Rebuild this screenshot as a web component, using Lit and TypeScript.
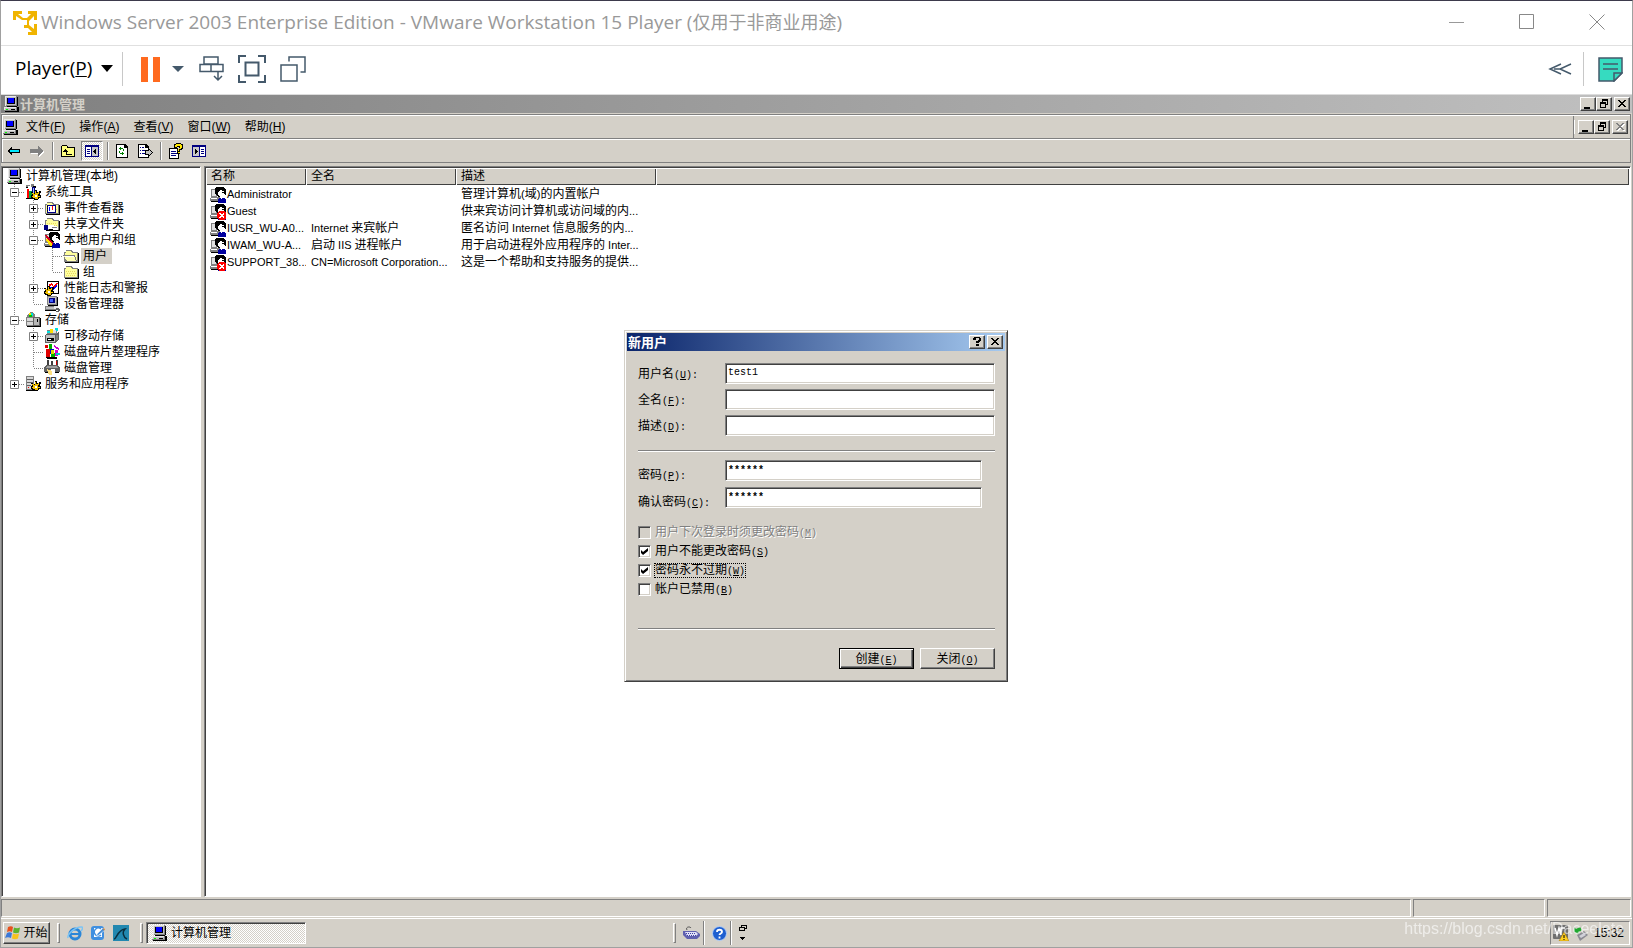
import { LitElement, html, css, svg, nothing } from "lit";
import { customElement } from "lit/decorators.js";

/* ---------- text helper: Latin runs are set a little smaller than Han ---------- */
const mix = (text: string) =>
  text
    .split(/([\x20-\x7e]+)/)
    .filter((s) => s)
    .map((s) => (/^[\x20-\x7e]/.test(s) ? html`<span class="latin">${s}</span>` : s));
const key = (text: string, k: string, tail = "") =>
  html`${text}<span class="latin">(<u>${k}</u>)${tail}</span>`;

/* ---------- icons ---------- */
const pix = (body: unknown, w = 16, h = 16) =>
  html`<svg class="pix" width=${w} height=${h} viewBox="0 0 ${w} ${h}" aria-hidden="true">${body}</svg>`;

const gear = (x: number, y: number) => svg`
  <g transform="translate(${x} ${y})">
    <path fill="#000" d="M4 0h2v2h2v-1h2v2h-1v2h1v3h-2v1h-1v1H3V9H1V8H0V5h1V3H0V2h2v1h2z"/>
    <path fill="#f0c000" d="M4 1h1v2h2V2h1v2h-1v2h2v1H7v2H4V8H2V7H1V6h1V4H1V3h2v1h1z"/>
    <path fill="#fff" d="M4 5h2v2H4z"/>
  </g>`;
const folder = (open = false) => svg`
  <path fill="#808080" d="M3 2h5l2 2h5v10H1V4h2z"/>
  <path fill="#ffff9c" d="M3 3h4l2 2h5v8H2V5h1z"/>
  <path fill="#e8d860" d="M3 7h1v1H3zM5 7h1v1H5zM7 7h1v1H7zM9 7h1v1H9zM11 7h1v1h-1zM4 9h1v1H4zM6 9h1v1H6zM8 9h1v1H8zM10 9h1v1h-1zM12 9h1v1h-1zM3 11h1v1H3zM5 11h1v1H5zM7 11h1v1H7zM9 11h1v1H9zM11 11h1v1h-1z"/>
  <path fill="#000" d="M15 5h1v10H2v-1h13z"/>
  ${open ? svg`<path fill="#808080" d="M0 7h12l2 6v1H3z"/><path fill="#ffffb0" d="M1 8h10l2 5H4z"/><path fill="#fff" d="M2 8h9v1H2z"/>` : nothing}`;
const head = svg`
  <path fill="#808080" d="M1 2h6v8H1z"/><path fill="#e0e0e0" d="M2 3h4v6H2z"/>
  <path fill="#808080" d="M1 10h9v4H0v-3z"/><path fill="#fff" d="M1 11h6v1H1z"/><path fill="#000" d="M0 14h11v1H1z"/>
  <path fill="#000" d="M6 0h7l3 3v5h-2L8 10 5 7V2z"/>
  <path fill="#fff" d="M10 3l4 1v2l1 2-1 1v2h-3L8 8V6z"/><path fill="#000" d="M12 5h2v1h-2z"/>
  <path fill="#0000a0" d="M9 11h5l2 2v3H8v-3z"/><path fill="#fff" d="M11 10h2l-1 3z"/>`;

const icons: Record<string, unknown> = {
  computer: pix(svg`
    <path fill="#808080" d="M2 0h12v10H2zM1 11h13v4H1z"/>
    <path fill="#e8e8e8" d="M2 0h11v1H3v9H2zM1 11h12v1H2v2H1z"/>
    <path fill="#c0c0c0" d="M3 1h10v8H3zM2 12h11v2H2z"/>
    <path fill="#000" d="M4 2h8v6H4z"/><path fill="#0000ff" d="M5 2h6v5H5z"/>
    <path fill="#000" d="M14 1h1v9h-1v1H4v-1h10zM14 11h1l1 1v3l-1 1H2v-1h12zM8 13h4v1H8z"/>
    <path fill="#00ff00" d="M3 13h2v1H3z"/>`),
  tools: pix(svg`
    <path fill="#808080" d="M1 1h4v2H1zM6 0h3v3H6z"/><path fill="#000" d="M1 3h5v1H1zM8 2h3v2H8z"/>
    <path fill="#fff" d="M3 2h3v4H3z"/><path fill="#ff0000" d="M2 5h2v9H2z"/><path fill="#00a040" d="M4 7h3v7H4z"/>
    <path fill="#000080" d="M7 3h3v9H7z"/><path fill="#a0c0ff" d="M8 4h1v7H8z"/><path fill="#000" d="M1 14h7v1H1z"/>${gear(6, 6)}`),
  event: pix(svg`${folder()}<path fill="#000080" d="M3 5h9v8H3z"/><path fill="#fff" d="M4 6h7v6H4z"/><path fill="#f00" d="M8 6h1v4H8z"/><path fill="#00f" d="M5 7h1v4H5z"/><path fill="#000" d="M3 6h1v1H3zM3 8h1v1H3zM3 10h1v1H3z"/>`),
  share: pix(svg`${folder()}<path fill="#000080" d="M0 9h4v5H0z"/><path fill="#fff" d="M4 9h5l5 2v3H6l-2-1z"/><path fill="#000" d="M4 13h3l3 1h4v1H6z"/><path fill="#808080" d="M8 11h5v1H8z"/>`),
  users: pix(svg`${head}<path fill="#d00020" d="M1 3h2l6 8v2H7z"/><path fill="#ffe000" d="M3 6l5 6v2H6L2 8z"/>`),
  openfolder: pix(folder(true)),
  folder: pix(folder()),
  perf: pix(svg`<path fill="#000" d="M3 1h12v13H3z"/><path fill="#fff" d="M4 2h10v11H4z"/><path fill="#f00" d="M5 4h2V3h1v1h1v2h1V5h1V4h1V3h2v1h-1v1h-1v1h-1v1H9V6H8V5H7v1H5z"/><path fill="#00f" d="M5 8h1V7h2v1h2V7h1V6h1V5h1v2h-1v1h-1v1h-1v1H9V9H7v1H5z"/>${gear(0, 6)}`),
  device: pix(svg`<path fill="#808080" d="M3 0h10v9H3zM1 10h13v4H1z"/><path fill="#c0c0c0" d="M4 1h8v7H4zM2 11h9v2H2z"/><path fill="#000080" d="M5 2h6v5H5z"/><path fill="#4060ff" d="M6 3h3v3H6z"/><path fill="#000" d="M13 1h1v9H4V9h9zM1 14h11v1H1z"/><path fill="#e8e8e8" d="M10 10h4v3h-4z"/><path fill="#606060" d="M12 12h3l1 2-2 2h-2v-1h2v-1h-2z"/>`),
  storage: pix(svg`<path fill="#808080" d="M1 5h14v9H1z"/><path fill="#d8d8d8" d="M2 6h7v3H2zM2 10h7v3H2z"/><path fill="#808080" d="M2 3l3-3h2l3 3v3H2z"/><path fill="#ffe000" d="M4 1h2v3H4z"/><path fill="#00e0e0" d="M6 1h2v3H6z"/><path fill="#00c000" d="M4 3h3v2H4z"/><path fill="#606060" d="M8 5h7v9H8z"/><path fill="#b8b8b8" d="M9 6h5v7H9z"/><path fill="#000" d="M12 7h1v3h-1zM15 6h1v9H2v-1h13z"/>`),
  removable: pix(svg`<path fill="#606060" d="M2 6h10l3-3v8l-3 4H1V7z"/><path fill="#c0c0c0" d="M2 7h9v7H2z"/><path fill="#000" d="M3 10h7v3H3z"/><path fill="#fff" d="M4 11h3v1H4z"/><path fill="#808080" d="M3 2h10v4H3z"/><path fill="#00e0e0" d="M3 3h3v2H3zM11 0h3v3h-3z"/><path fill="#ffe000" d="M6 1h3v4H6z"/><path fill="#e0e0e0" d="M9 2h3v3H9z"/><path fill="#808080" d="M12 7h2v5h-2z"/>`),
  defrag: pix(svg`<path fill="#e00000" d="M1 1h3v3H1zM2 5h4v9H2z"/><path fill="#00b000" d="M5 0h3v5H5zM7 9h4v5H7z"/><path fill="#0000d0" d="M6 5h4v5H6z"/><path fill="#e0d000" d="M7 6h3v4H7z"/><path fill="#d000d0" d="M10 1l5 3v2l-5-3zM11 6h3v6h-3z"/><path fill="#00d0d0" d="M12 9h4v2h-4z"/><path fill="#000" d="M1 13h12v2H4z"/>`),
  disk: pix(svg`<path fill="#404040" d="M3 0h2v6H3zM7 1h2v4H7zM12 0h2v6h-2z"/><path fill="#d00000" d="M12 1h1v4h-1z"/><path fill="#606060" d="M2 5h12l2 3v4H0V8z"/><path fill="#a0a0a0" d="M3 6h10l1 2H2z"/><path fill="#000" d="M0 12h15v1H1z"/><path fill="#ffe080" d="M3 9l5 2v4H5z"/><path fill="#fff" d="M7 9h4v4H8z"/>`),
  services: pix(svg`<path fill="#808080" d="M1 0h8v14H1z"/><path fill="#d8d8d8" d="M2 1h6v12H2z"/><path fill="#606060" d="M2 3h6v1H2zM2 6h6v1H2zM2 9h4v1H2z"/><path fill="#f00" d="M3 11h1v1H3z"/><path fill="#000" d="M1 14h9v1H1z"/>${gear(6, 5)}`),
  user: pix(head),
  userOff: pix(svg`${head}<path fill="#f00" d="M9 7h5l2 2v5l-2 2H9l-2-2V9z"/><path fill="#fff" d="M9 9h1l1.500 1.500L13 9h1v1l-1.500 1.500L14 13v1h-1l-1.500-1.500L10 14H9v-1l1.500-1.500L9 10z"/>`),
};

const toolIcons: Record<string, unknown> = {
  back: pix(svg`<path fill="#000" d="M0 6l5-5v3h8v4H5v3z"/><path fill="#00e8ff" d="M2 6l2-2v1h8v2H4v1z"/>`, 13, 12),
  forward: pix(svg`<path fill="#fff" d="M14 7L9 12V9H1V5h8V2z"/><path fill="#808080" d="M13 6L8 11V8H0V4h8V1z"/>`, 14, 12),
  up: pix(svg`<path fill="#000" d="M1 3h1V2h5v1h1v1h7v10H1z"/><path fill="#ffff80" d="M2 3h5v2h7v8H2z"/><path fill="#000" d="M5 6h1v1h1v1h1v1H7v2h5v1H6V9H3V8h1V7h1z"/>`),
  tree: pix(svg`<path fill="#000080" d="M1 2h14v12H1z"/><path fill="#fff" d="M2 4h5v9H2z"/><path fill="#c8c8c8" d="M8 4h6v9H8z"/><path fill="#000080" d="M3 6h3v1H3zM3 8h3v1H3zM3 10h3v1H3z"/><path fill="#000" d="M12 5v7L9 8.500z"/>`),
  refresh: pix(svg`<path fill="#000" d="M2 1h9l3 3v11H2z"/><path fill="#fff" d="M3 2h7v3h3v9H3z"/><path fill="#008000" d="M7 4v1h2v1h1v2H9V6H7v1L5 5.500zM8 12v-1H6v-1H5V8h1v2h2V9l2 1.500z"/>`),
  exportList: pix(svg`<path fill="#000" d="M1 1h8l3 3v11H1z"/><path fill="#fff" d="M2 2h6v3h3v9H2z"/><path fill="#000080" d="M3 4h1v1H3zM5 4h2v1H5zM3 7h1v1H3zM5 7h3v1H5zM3 10h1v1H3zM5 10h3v1H5z"/><path fill="#000" d="M8 7h3V5l5 4.500L11 14v-2H8z"/><path fill="#c0c0c0" d="M9 8h3V7l3 2.500L12 12v-1H9z"/>`),
  help: pix(svg`<path fill="#000" d="M1 5h8l2 2v9H1z"/><path fill="#fff" d="M2 6h7v2h1v7H2z"/><path fill="#000080" d="M3 8h5v1H3zM3 10h6v1H3zM3 12h5v1H3z"/><path fill="#000" d="M6 1h2V0h5v1h2v5h-1v1h-2v4H9V6h2V4H9v1H6z"/><path fill="#ffe800" d="M7 2h1V1h5v1h1v3h-1v1h-2v2h-1V6h1V5h1V3H9v1H7zM10 9h2v1h-2z"/>`),
  pane: pix(svg`<path fill="#000080" d="M1 2h14v12H1z"/><path fill="#c8c8c8" d="M2 4h6v9H2z"/><path fill="#fff" d="M9 4h5v9H9z"/><path fill="#000080" d="M10 6h3v1h-3zM10 8h3v1h-3zM10 10h3v1h-3z"/><path fill="#000" d="M4 5v7l3-3.500z"/>`),
};

const glyph = {
  min: pix(svg`<path d="M3 9h6v2H3z"/>`, 14, 12),
  restore: pix(svg`<path fill-rule="evenodd" d="M5 1h6v6H9V6h1V3H6v1H5zM3 4h6v6H3zM4 6v3h4V6z"/>`, 14, 12),
  close: pix(svg`<path d="M3 2h2v1h1v1h2V3h1V2h2v1h-1v1H9v1H8v1h1v1h1v1h1v1H9V8H8V7H6v1H5v1H3V8h1V7h1V6h1V5H5V4H4V3H3z"/>`, 14, 12),
  help: pix(svg`<path d="M4 1h6v1h1v3h-1v1H9v1H6V5h2V4h1V2H6v2H3V2h1zM6 8h3v2H6z"/>`, 14, 12),
};

interface Node {
  guides: string[]; // one per indent cell: "|" through, "t" tee, "l" elbow, "+" / "-" expander, "e" last expander
  icon: string;
  label: string;
  selected?: boolean;
}
const tree: Node[] = [
  { guides: [], icon: "computer", label: "计算机管理(本地)" },
  { guides: ["-"], icon: "tools", label: "系统工具" },
  { guides: ["|", "+"], icon: "event", label: "事件查看器" },
  { guides: ["|", "+"], icon: "share", label: "共享文件夹" },
  { guides: ["|", "-"], icon: "users", label: "本地用户和组" },
  { guides: ["|", "|", "t"], icon: "openfolder", label: "用户", selected: true },
  { guides: ["|", "|", "l"], icon: "folder", label: "组" },
  { guides: ["|", "+"], icon: "perf", label: "性能日志和警报" },
  { guides: ["|", "l"], icon: "device", label: "设备管理器" },
  { guides: ["-"], icon: "storage", label: "存储" },
  { guides: ["|", "+"], icon: "removable", label: "可移动存储" },
  { guides: ["|", "t"], icon: "defrag", label: "磁盘碎片整理程序" },
  { guides: ["|", "l"], icon: "disk", label: "磁盘管理" },
  { guides: ["e"], icon: "services", label: "服务和应用程序" },
];

const guideCell = (g: string) => {
  const box = "+-e".includes(g);
  const half = g === "l" || g === "e";
  const drawing = html`<svg class="guide" width="19" height="16" viewBox="0 0 19 16" aria-hidden="true">
    <path d="M9.500 0V${half ? 8 : 16}${g === "|" ? "" : "M10 8.500H19"}" stroke="#808080" stroke-dasharray="1 1" fill="none"/>
    ${box
      ? svg`<path fill="#fff" stroke="#808080" d="M5.500 4.500h8v8h-8z"/><path fill="#000" d="M7 8h5v1H7z"/>${g === "-" ? nothing : svg`<path fill="#000" d="M9 6h1v5H9z"/>`}`
      : nothing}
  </svg>`;
  return box ? html`<button class="expander" aria-label=${g === "-" ? "折叠" : "展开"}>${drawing}</button>` : drawing;
};

const accounts = [
  ["user", "Administrator", "", "管理计算机(域)的内置帐户"],
  ["userOff", "Guest", "", "供来宾访问计算机或访问域的内..."],
  ["user", "IUSR_WU-A0...", "Internet 来宾帐户", "匿名访问 Internet 信息服务的内..."],
  ["user", "IWAM_WU-A...", "启动 IIS 进程帐户", "用于启动进程外应用程序的 Inter..."],
  ["userOff", "SUPPORT_38...", "CN=Microsoft Corporation...", "这是一个帮助和支持服务的提供..."],
];

const shared = css`
  :host, * { box-sizing: border-box; }
  svg { display: block; flex: none; }
  .pix { shape-rendering: crispEdges; }
  button { font: inherit; color: inherit; margin: 0; padding: 0; border: 0; background: none; display: flex; align-items: center; justify-content: center; }
  .latin { font-family: "Liberation Sans", sans-serif; font-size: 11px; line-height: 0; }
  .small {
    width: 16px; height: 14px; background: #d4d0c8;
    border: 1px solid; border-color: #fff #404040 #404040 #fff;
    box-shadow: inset -1px -1px #808080;
  }
  .small[disabled] { color: #808080; }
  .small[disabled] svg { fill: #808080; filter: drop-shadow(1px 1px #fff); }
`;

@customElement("new-user-dialog")
class NewUserDialog extends LitElement {
  static styles = [shared, css`
    :host {
      display: block; background: #d4d0c8; padding: 2px;
      border: 1px solid; border-color: #d4d0c8 #404040 #404040 #d4d0c8;
      box-shadow: inset 1px 1px #fff, inset -1px -1px #808080;
      font: 12px/16px "Liberation Sans", "Noto Sans CJK SC", sans-serif; color: #000;
    }
    .latin { font-family: "Liberation Mono", monospace; font-size: 10px; }
    .title { display: flex; align-items: center; height: 18px; padding: 0 2px 0 1px; background: linear-gradient(90deg, #0a246a, #a6caf0); color: #fff; }
    h2 { margin: 0; flex: 1; font: bold 13px/16px "Noto Sans CJK SC", sans-serif; }
    .title button + button { margin-left: 2px; }
    form { padding: 12px 10px 10px 11px; }
    .fields { display: grid; grid-template-columns: 87px 1fr; row-gap: 5px; align-items: center; }
    .fields.secret { padding-right: 13px; row-gap: 6px; align-items: end; }
    .secret label { margin-bottom: -2px; }
    input.text {
      width: 100%; height: 21px; margin: 0; padding: 0 2px 2px; background: #fff; outline: 0; border-radius: 0;
      border: 1px solid; border-color: #808080 #fff #fff #808080;
      box-shadow: inset 1px 1px #404040, inset -1px -1px #d4d0c8;
      font: 10px/16px "Liberation Mono", monospace; color: #000;
    }
    .secret input.text { font-weight: bold; padding-bottom: 0; }
    hr { margin: 0; height: 2px; border: 0; border-top: 1px solid #808080; border-bottom: 1px solid #fff; }
    .fields + hr { margin: 14px 0 8px; }
    .checks { display: grid; grid-auto-rows: 15px; row-gap: 4px; margin: 17px 0 31px; }
    .check { display: flex; align-items: center; gap: 3px; justify-self: start; }
    .check input {
      appearance: none; margin: 0; width: 13px; height: 13px; background: #fff; display: grid; place-items: center; outline: 0;
      border: 1px solid; border-color: #808080 #fff #fff #808080;
      box-shadow: inset 1px 1px #404040, inset -1px -1px #d4d0c8;
    }
    .check input:checked::before { content: ""; width: 7px; height: 7px; background: #000; clip-path: polygon(0 29%, 29% 57%, 100% 0, 100% 43%, 29% 100%, 0 72%); }
    .check .cap { line-height: 13px; border: 1px dotted transparent; }
    .check.focus .cap { border-color: #000; }
    .check.off { color: #808080; text-shadow: 1px 1px #fff; }
    .check.off input { background: #d4d0c8; }
    .actions { display: flex; justify-content: flex-end; gap: 6px; margin-top: 18px; }
    .actions button {
      width: 75px; height: 21px; background: #d4d0c8;
      border: 1px solid; border-color: #fff #404040 #404040 #fff; box-shadow: inset -1px -1px #808080;
    }
    .actions .default { border-color: #000; box-shadow: inset 1px 1px #fff, inset -1px -1px #404040, inset -2px -2px #808080; }
  `];
  field(id: string, text: string, k: string, value = "") {
    return html`<label for=${id}>${key(text, k, ":")}</label><input class="text" id=${id} .value=${value} autocomplete="off" />`;
  }
  check(text: string, k: string, on: boolean, mod = "") {
    return html`<label class="check ${mod}"><input type="checkbox" .checked=${on} ?disabled=${mod === "off"} /><span class="cap">${key(text, k)}</span></label>`;
  }
  render() {
    return html`
      <div class="title"><h2>新用户</h2>
        <button class="small" aria-label="帮助">${glyph.help}</button><button class="small" aria-label="关闭">${glyph.close}</button>
      </div>
      <form @submit=${(e: Event) => e.preventDefault()}>
        <div class="fields">
          ${this.field("name", "用户名", "U", "test1")}
          ${this.field("full", "全名", "F")}
          ${this.field("desc", "描述", "D")}
        </div>
        <hr />
        <div class="fields secret">
          ${this.field("pw", "密码", "P", "******")}
          ${this.field("pw2", "确认密码", "C", "******")}
        </div>
        <div class="checks">
          ${this.check("用户下次登录时须更改密码", "M", false, "off")}
          ${this.check("用户不能更改密码", "S", true)}
          ${this.check("密码永不过期", "W", true, "focus")}
          ${this.check("帐户已禁用", "B", false)}
        </div>
        <hr />
        <div class="actions"><button class="default"><span>${key("创建", "E")}</span></button><button type="button"><span>${key("关闭", "O")}</span></button></div>
      </form>`;
  }
}

@customElement("player-bar")
class PlayerBar extends LitElement {
  static styles = [shared, css`
    :host { display: block; background: #fff; font-family: "Open Sans", "Noto Sans CJK SC", sans-serif; }
    .caption { display: flex; align-items: center; height: 45px; padding: 0 27px 2px 11px; border-bottom: 1px solid #e0e0e0; }
    h1 { flex: 1; margin: 0 0 0 4px; font-size: 19px; line-height: 24px; font-weight: 400; color: #999; white-space: nowrap; }
    .han { font-size: 18px; line-height: 0; }
    .win { display: flex; gap: 53px; }
    .win button { width: 17px; height: 17px; }
    .tools { display: flex; align-items: center; height: 49px; padding: 0 9px 2px 14px; border-bottom: 1px solid #dcdcdc; }
    .menu { font-size: 19px; line-height: 24px; gap: 9px; padding-bottom: 2px; }
    .bar { width: 1px; height: 34px; background: #c8c8c8; }
    .menu + .bar { margin: 0 18px 0 9px; }
    .drop { margin: 0 15px 0 11px; }
    .gap { margin-left: 14px; }
    .space { flex: 1; }
    .space ~ .bar { margin: 0 14px 0 11px; }
  `];
  render() {
    return html`
      <div class="caption">
        <svg width="25" height="25" viewBox="0 0 25 25" fill="#f0b400">
          <path d="M1 1h9v3H6l5 4h4l4-4h-3V1h9v9h-3V6l-5 5v4l5 4v-5h3v11h-9v-3h4l-4-4h-4v-3h3v-5h-5L4 6v4H1z" />
        </svg>
        <h1>Windows Server 2003 Enterprise Edition - VMware Workstation 15 Player (<span class="han">仅用于非商业用途</span>)</h1>
        <div class="win">
          <button aria-label="最小化"><svg width="16" height="16"><path d="M0 8.500h15" stroke="#999" /></svg></button>
          <button aria-label="最大化"><svg width="16" height="16"><path d="M.5.5h14v14H.5z" fill="none" stroke="#888" /></svg></button>
          <button aria-label="关闭"><svg width="16" height="16"><path d="M.5.5l15 15M15.500.5l-15 15" stroke="#888" /></svg></button>
        </div>
      </div>
      <div class="tools">
        <button class="menu"><span>Player(<u>P</u>)</span><svg width="12" height="7"><path d="M0 0h12L6 7z" /></svg></button>
        <span class="bar"></span>
        <button aria-label="挂起"><svg width="20" height="25" fill="#ff6a1f"><path d="M0 0h7v25H0zM12 0h7v25h-7z" /></svg></button>
        <button class="drop" aria-label="电源"><svg width="12" height="6" fill="#44596b"><path d="M0 0h12L6 6z" /></svg></button>
        <button aria-label="发送 Ctrl+Alt+Del"><svg width="25" height="26" viewBox="0 0 25 26" fill="none" stroke="#44596b" stroke-width="1.500"><path d="M5 1h14v7H5zM1 8.500h11v7H1zM12 8.500h12v7H12zM19 15.500v8M15 20l4 4 4-4" /></svg></button>
        <button class="gap" aria-label="全屏"><svg width="28" height="28" viewBox="0 0 28 28" fill="none" stroke="#44596b" stroke-width="2"><path d="M1 8V1h7M20 1h7v7M27 20v7h-7M8 27H1v-7M7.500 7.500h13v13h-13z" /></svg></button>
        <button class="gap" aria-label="Unity"><svg width="26" height="26" viewBox="0 0 26 26" fill="none" stroke="#44596b" stroke-width="1.500"><path d="M1 9h16v16H1zM9 5.500V1h16v15h-4.500" /></svg></button>
        <span class="space"></span>
        <button aria-label="收起"><svg width="24" height="12" viewBox="0 0 24 12" fill="none" stroke="#44596b" stroke-width="1.500"><path d="M13 1L2 6l11 5M23 1L12 6l11 5M6 6h7" /></svg></button>
        <span class="bar"></span>
        <button aria-label="便笺"><svg width="25" height="25" viewBox="0 0 25 25" fill="#36dbc0" stroke="#44596b" stroke-width="1.500"><path d="M1 1h23v15l-8 8H1z" /><path d="M24 16h-8v8zM5 7h15M5 12h15" /></svg></button>
      </div>`;
  }
}

@customElement("mgmt-console")
class MgmtConsole extends LitElement {
  static styles = [shared, css`
    :host { display: flex; flex-direction: column; flex: 1; min-height: 0; background: #d4d0c8; font: 12px/16px "Liberation Sans", "Noto Sans CJK SC", sans-serif; color: #000; }
    .title { display: flex; align-items: center; height: 18px; padding: 0 2px; background: linear-gradient(90deg, #808080, #c0c0c0); color: #d4d0c8; }
    h2 { flex: 1; margin: 0 0 0 1px; font: bold 13px/16px "Noto Sans CJK SC", sans-serif; }
    .title .small:last-child, .mdi .small:last-child { margin-left: 2px; }
    .bars { margin: 1px 1px 3px 0; border: 1px solid #808080; box-shadow: inset 1px 1px #fff; padding-top: 1px; }
    .row { display: flex; align-items: center; }
    .menubar { height: 23px; border-bottom: 1px solid #808080; }
    nav { flex: 1; display: flex; align-items: center; height: 22px; border-right: 1px solid #808080; }
    nav ul { display: flex; list-style: none; gap: 14px; margin: 0 0 0 8px; padding: 0; }
    nav button { white-space: nowrap; }
    nav .latin { font-size: 12px; }
    .mdi { display: flex; padding: 0 2px 0 3px; border-left: 1px solid #fff; }
    .tools { height: 23px; border-top: 1px solid #fff; padding-left: 5px; }
    .tools i { width: 2px; height: 18px; border-left: 1px solid #808080; border-right: 1px solid #fff; }
    .tools button { height: 20px; }
    .t-forward { margin: 0 8px 0 10px; }
    .t-up { margin: 0 5px 0 6px; }
    .t-tree { width: 22px; border: 1px solid; border-color: #808080 #fff #fff #808080; background: repeating-conic-gradient(#fff 0 25%, #d4d0c8 0 50%) 0 0 / 2px 2px; }
    .t-tree + i { margin-left: 4px; }
    .t-refresh { margin: 0 7px 0 5px; }
    .t-exportList + i { margin-left: 7px; }
    .t-help { margin: 0 7px 0 6px; }
    .panes { flex: 1; min-height: 0; display: grid; grid-template-columns: 200px 1fr; column-gap: 3px; padding-right: 1px; }
    .pane { background: #fff; border: 1px solid; border-color: #808080 #fff #fff #808080; box-shadow: inset 1px 1px #404040; padding: 1px; min-width: 0; overflow: hidden; }
    .tree { list-style: none; margin: 0; padding: 0 0 0 2px; }
    .tree li { display: flex; align-items: center; height: 16px; white-space: nowrap; }
    .tree .pix { margin: 0 2px 0 1px; }
    .tree a { color: inherit; text-decoration: none; padding: 0 5px 0 2px; }
    .tree .latin { font-size: 12px; }
    .tree .sel { background: #d4d0c8; }
    table { width: 100%; border-collapse: collapse; table-layout: fixed; }
    .c1 { width: 100px; } .c2 { width: 150px; } .c3 { width: 200px; }
    th { height: 17px; padding: 0 0 0 5px; text-align: left; font-weight: 400; line-height: 17px; background: #d4d0c8; box-shadow: inset 1px 1px #fff, inset -1px -1px #404040; }
    td { height: 17px; padding: 0 0 0 5px; line-height: 17px; white-space: nowrap; overflow: hidden; }
    td:first-child { padding-left: 4px; }
    tbody::before { content: ""; display: block; height: 1px; }
    .who { display: flex; align-items: center; gap: 1px; height: 17px; }
    .status { display: grid; grid-template-columns: 1fr 132px 84px; column-gap: 2px; margin-top: 2px; padding-right: 1px; height: 18px; }
    .status span { border: 1px solid; border-color: #808080 #fff #fff #808080; }
  `];
  tool(name: string, label: string) {
    return html`<button class="t-${name}" aria-label=${label}>${toolIcons[name]}</button>`;
  }
  render() {
    const menus = [["文件", "F"], ["操作", "A"], ["查看", "V"], ["窗口", "W"], ["帮助", "H"]];
    return html`
      <div class="title">${icons.computer}<h2>计算机管理</h2>
        <button class="small" aria-label="最小化">${glyph.min}</button><button class="small" aria-label="还原">${glyph.restore}</button><button class="small" aria-label="关闭">${glyph.close}</button>
      </div>
      <div class="bars">
        <div class="row menubar">
          <nav>${icons.computer}<ul>${menus.map(([a, b]) => html`<li><button><span>${key(a, b)}</span></button></li>`)}</ul></nav>
          <div class="mdi"><button class="small" aria-label="最小化">${glyph.min}</button><button class="small" aria-label="还原">${glyph.restore}</button><button class="small" aria-label="关闭" disabled>${glyph.close}</button></div>
        </div>
        <div class="row tools">
          ${this.tool("back", "后退")}${this.tool("forward", "前进")}<i></i>
          ${this.tool("up", "向上")}${this.tool("tree", "显示/隐藏控制台树")}<i></i>
          ${this.tool("refresh", "刷新")}${this.tool("exportList", "导出列表")}<i></i>
          ${this.tool("help", "帮助")}${this.tool("pane", "显示/隐藏操作窗格")}
        </div>
      </div>
      <div class="panes">
        <div class="pane"><ul class="tree">
          ${tree.map((n) => html`<li>${n.guides.map(guideCell)}${icons[n.icon]}<a href="#" class=${n.selected ? "sel" : ""}>${mix(n.label)}</a></li>`)}
        </ul></div>
        <div class="pane"><table>
          <thead><tr><th class="c1">名称</th><th class="c2">全名</th><th class="c3">描述</th><th></th></tr></thead>
          <tbody>${accounts.map(([icon, name, full, desc]) => html`<tr>
            <td><span class="who">${icons[icon]}<span>${mix(name)}</span></span></td><td>${mix(full)}</td><td>${mix(desc)}</td><td></td></tr>`)}</tbody>
        </table></div>
      </div>
      <div class="status"><span></span><span></span><span></span></div>`;
  }
}

@customElement("task-bar")
class TaskBar extends LitElement {
  static styles = [shared, css`
    :host { display: flex; align-items: center; height: 31px; padding: 1px 2px 0 2px; background: #d4d0c8; border-top: 1px solid #d4d0c8; border-bottom: 1px solid #a0a0a0; box-shadow: inset 0 1px #fff; font: 12px/16px "Liberation Sans", "Noto Sans CJK SC", sans-serif; color: #000; }
    .start { width: 47px; height: 22px; gap: 2px; border: 1px solid; border-color: #fff #404040 #404040 #fff; box-shadow: inset -1px -1px #808080; }
    .grip { flex: none; width: 3px; height: 20px; border: 1px solid; border-color: #fff #808080 #808080 #fff; }
    .start + .grip { margin: 0 7px; }
    .quick { display: flex; gap: 7px; margin-right: 11px; }
    .task { width: 160px; height: 22px; margin-left: 3px; padding-left: 4px; justify-content: flex-start; gap: 4px; border: 1px solid; border-color: #808080 #fff #fff #808080; box-shadow: inset 1px 1px #404040; background: repeating-conic-gradient(#fff 0 25%, #d4d0c8 0 50%) 0 0 / 2px 2px; }
    .lang { display: flex; align-items: center; margin-left: 367px; gap: 3px; }
    .lang .line { width: 2px; height: 24px; border-left: 1px solid #808080; border-right: 1px solid #fff; }
    .lang button { margin-left: 4px; }
    .space { flex: 1; }
    .tray { display: flex; align-items: center; gap: 4px; width: 80px; height: 24px; padding: 0 3px 0 2px; border: 1px solid; border-color: #808080 #fff #fff #808080; }
    .tray time { flex: 1; text-align: center; }
    .tray .latin { font-size: 12px; }
  `];
  render() {
    return html`
      <button class="start"><svg width="16" height="16" viewBox="0 0 16 16">
        <path fill="#e8501c" d="M3 2c2-1 4-1 5 0L7 7c-2-1-3-1-5 0z" /><path fill="#5cb32c" d="M9 2.500c2 1 4 1 6 0l-1 5c-2 1-4 1-6 0z" />
        <path fill="#3b78d8" d="M2 8c2-1 3-1 5 0l-1 5c-2-1-4-1-6 0z" /><path fill="#f7c21c" d="M8 8.500c2 1 4 1 6 0l-1 5c-2 1-4 1-6 0z" /></svg>开始</button>
      <span class="grip"></span>
      <div class="quick">
        <button aria-label="Internet Explorer"><svg width="16" height="16" viewBox="0 0 16 16" fill="none"><circle cx="8" cy="9" r="5" stroke="#2a86d8" stroke-width="3" /><path d="M4 9h9" stroke="#2a86d8" stroke-width="2" /><path d="M1 13C0 9 9 1 15 2c1 1 0 3-1 4" stroke="#7cc4f4" stroke-width="1.500" /></svg></button>
        <button aria-label="显示桌面"><svg width="16" height="16" viewBox="0 0 16 16"><rect x="1" y="1" width="13" height="14" rx="3" fill="#3f8fe0" /><path d="M4 3h8v9H4z" fill="#fff" /><path d="M11 4a4 4 0 1 0 0 6" fill="none" stroke="#3f8fe0" stroke-width="1.500" /><path d="M7 9l6-6 2 2-6 5-2 1z" fill="#4a90d8" stroke="#fff" stroke-width=".5" /><path d="M13 3l2 1-1 2z" fill="#e08020" /></svg></button>
        <button aria-label="Wireshark"><svg width="16" height="16" viewBox="0 0 16 16"><path d="M0 0h16v16H0z" fill="#2288b0" /><path d="M1 14c3 0 3-9 11-10-3 3-2 8 2 10" fill="none" stroke="#0a3040" stroke-width="1.500" /></svg></button>
      </div>
      <span class="grip"></span>
      <button class="task">${icons.computer}计算机管理</button>
      <div class="lang">
        <span class="grip"></span>
        <button aria-label="输入法"><svg width="17" height="16" viewBox="0 0 17 16"><path d="M4 5c-2-3 3-4 4-2" fill="none" stroke="#555" /><path d="M0 6h13l4 3v2l-3 3H4l-4-4z" fill="#6060b0" /><path d="M2 7h11l2 2-2 2H4z" fill="#e0e0f8" /><path d="M3 8.500h10M4 10.500h9" stroke="#4040a0" stroke-dasharray="1 1" /></svg></button>
        <span class="line"></span>
        <button aria-label="帮助"><svg width="15" height="15" viewBox="0 0 15 15"><circle cx="7.500" cy="7.500" r="7" fill="#1e5fd0" stroke="#b8d0f4" /><path d="M5 6c0-3 5-3 5 0 0 1.500-2.500 1.500-2.500 3M7.500 10.500v2" fill="none" stroke="#fff" stroke-width="1.800" /></svg></button>
        <span class="line"></span>
        <button aria-label="选项">${pix(svg`<path fill-rule="evenodd" d="M2 0h6v4H6v2H0V2h2zM3 1v1h3v1h1V1zM1 3v2h4V3zM1 12h5v1H5v1H4v1H3v-1H2v-1H1z"/>`, 8, 16)}</button>
      </div>
      <span class="space"></span>
      <div class="tray">
        <svg width="16" height="16" viewBox="0 0 16 16"><rect width="15" height="14" rx="1" fill="#707070" /><path d="M2 3l2 7 2-7 2 7V3h4" fill="none" stroke="#fff" stroke-width="1.500" /><path d="M11 7l5 9H6z" fill="#ffd020" stroke="#a07000" stroke-width=".5" /><path d="M11 10v3M11 14v1" stroke="#000" /></svg>
        <svg width="15" height="15" viewBox="0 0 15 15"><path d="M1 6V1l2 2 4-2 2 3-4 3 1 1z" fill="#20a830" /><path d="M4 9l7-4 4 4-8 6z" fill="#8a8a92" /><path d="M6 10l5-3 2 2-5 3z" fill="#d0d0d8" /></svg>
        <time><span class="latin">15:32</span></time>
      </div>`;
  }
}

@customElement("app-root")
class AppRoot extends LitElement {
  static styles = css`
    :host { display: flex; flex-direction: column; box-sizing: border-box; height: 100vh; position: relative; border: solid #a0a0a0; border-width: 0 1px; border-top: 1px solid #3d3a4c; overflow: hidden; background: #d4d0c8; }
    new-user-dialog { position: absolute; left: round(down, calc(50% - 192px), 1px); top: 329px; width: 384px; }
    .mark { position: absolute; right: 8px; bottom: 9px; font: 16px/20px "Liberation Sans", sans-serif; color: #fff; opacity: .6; pointer-events: none; }
  `;
  render() {
    return html`
      <player-bar></player-bar>
      <mgmt-console></mgmt-console>
      <task-bar></task-bar>
      <new-user-dialog></new-user-dialog>
      <span class="mark">https://blog.csdn.net/Daceelete</span>`;
  }
}
